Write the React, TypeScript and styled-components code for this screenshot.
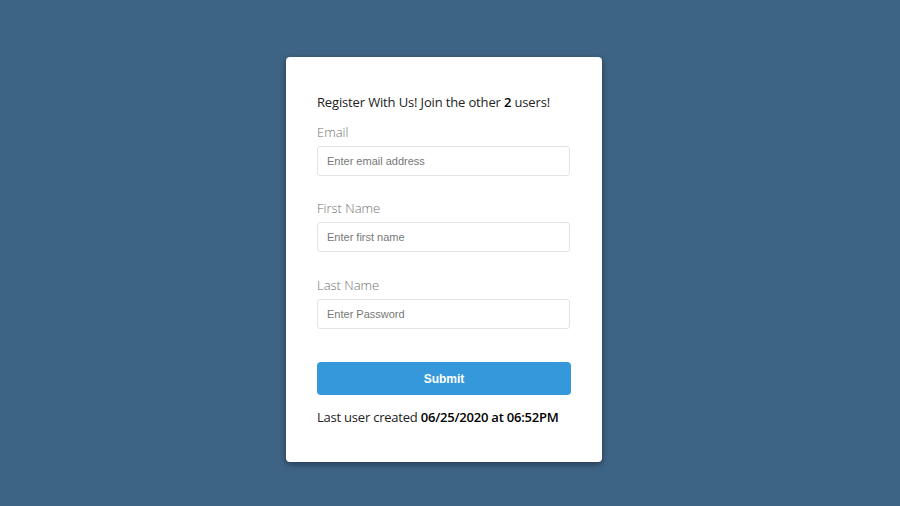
import React from "react";
import styled, { createGlobalStyle } from "styled-components";

const Global = createGlobalStyle`
  html, body { margin: 0; padding: 0; }
  body {
    background: #3e6485;
    font-family: "Open Sans", "Liberation Sans", sans-serif;
  }
`;

const Page = styled.div`
  width: 900px;
  height: 506px;
  display: flex;
  justify-content: flex-start;
  padding: 57px 0 0 286px;
  box-sizing: border-box;
`;

const Card = styled.form`
  width: 316px;
  height: 405px;
  box-sizing: border-box;
  background: #ffffff;
  border-radius: 4px;
  box-shadow: 0 2px 6px rgba(0, 0, 0, 0.45);
  padding: 35px 32px 0 31px;
  display: flex;
  flex-direction: column;
`;

const Title = styled.h2`
  margin: 0;
  font-size: 13px;
  font-weight: 400;
  color: #222;
  line-height: 20px;
  letter-spacing: -0.15px;
  white-space: nowrap;
  b { font-weight: 600; color: #000; }
`;

const Field = styled.div<{ $gap: number }>`
  display: flex;
  flex-direction: column;
  margin-top: ${(p) => p.$gap}px;
`;

const Label = styled.label`
  font-size: 13px;
  font-weight: 300;
  color: #707070;
  line-height: 18px;
  margin-bottom: 5px;
`;

const Input = styled.input`
  width: 253px;
  height: 30px;
  box-sizing: border-box;
  border: 1px solid #e3e3e3;
  border-radius: 3px;
  padding: 0 9px;
  font-family: "Liberation Sans", Arial, sans-serif;
  font-size: 11px;
  color: #333;
  outline: none;
  &::placeholder { color: #777; }
`;

const Submit = styled.button`
  margin-top: 33px;
  width: 254px;
  height: 33px;
  border: none;
  border-radius: 4px;
  background: #3498db;
  color: #fff;
  font-family: "Liberation Sans", Arial, sans-serif;
  font-size: 12px;
  font-weight: 700;
  cursor: pointer;
`;

const Footer = styled.p`
  margin: 12px 0 0;
  font-size: 13px;
  color: #222;
  line-height: 20px;
  letter-spacing: -0.22px;
  white-space: nowrap;
  b { font-weight: 600; color: #000; }
`;

export default function App() {
  return (
    <>
      <Global />
      <Page>
        <Card onSubmit={(e) => e.preventDefault()}>
          <Title>
            Register With Us! Join the other <b>2</b> users!
          </Title>
          <Field $gap={11}>
            <Label>Email</Label>
            <Input placeholder="Enter email address" />
          </Field>
          <Field $gap={23}>
            <Label>First Name</Label>
            <Input placeholder="Enter first name" />
          </Field>
          <Field $gap={24}>
            <Label>Last Name</Label>
            <Input placeholder="Enter Password" />
          </Field>
          <Submit type="submit">Submit</Submit>
          <Footer>
            Last user created <b>06/25/2020 at 06:52PM</b>
          </Footer>
        </Card>
      </Page>
    </>
  );
}
